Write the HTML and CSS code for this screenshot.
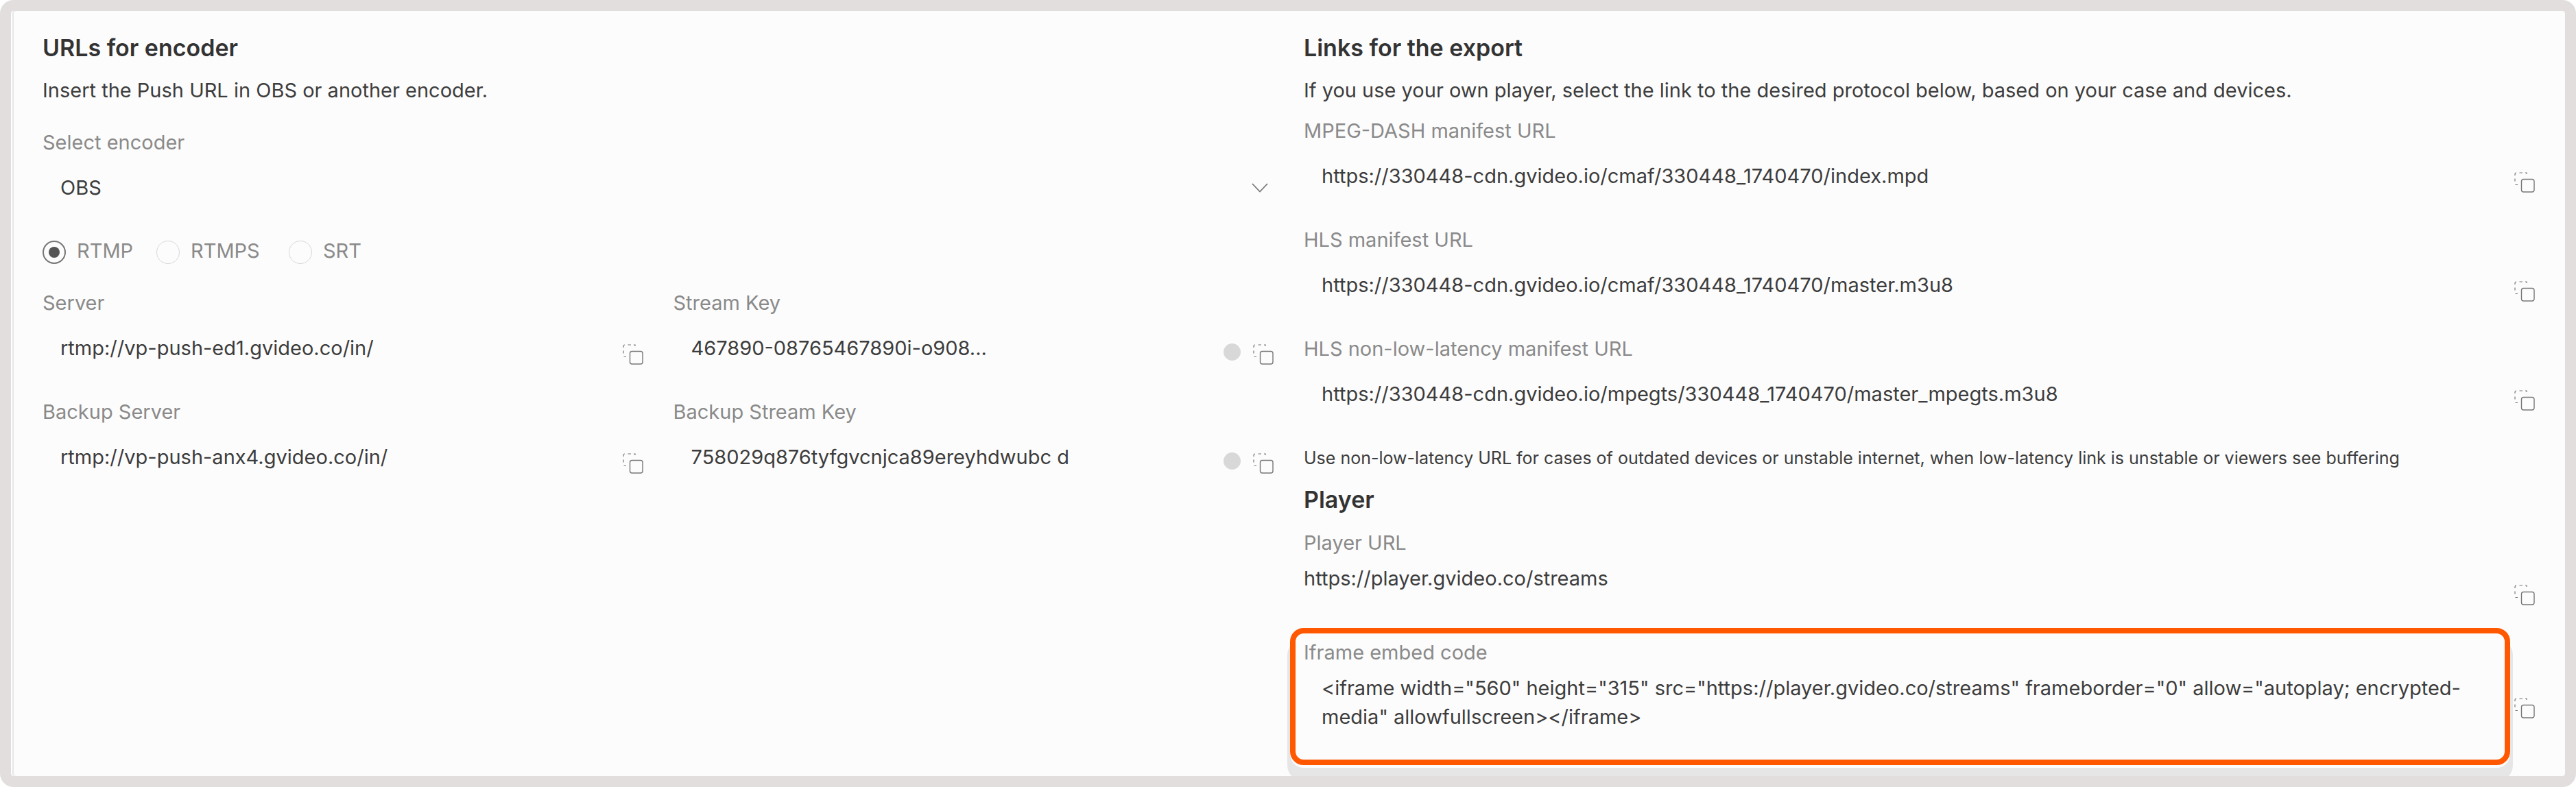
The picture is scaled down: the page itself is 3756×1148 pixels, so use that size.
FILE: index.html
```html
<!DOCTYPE html>
<html lang="en">
<head>
<meta charset="utf-8">
<title>Stream settings</title>
<link rel="stylesheet" href="styles.css">
</head>
<body>
<svg class="sprite" aria-hidden="true">
  <symbol id="copy" viewBox="0 0 30 30">
    <path d="M1 5V3.500Q1 1.200 3 1M7.500 1h4.500M16 1h2v2M1 9.500v4M1.500 18.500H5" fill="none" stroke="#777" stroke-width="1.200"/>
    <rect x="10.500" y="10.500" width="18.500" height="18.500" rx="3" fill="none" stroke="#777" stroke-width="1.400"/>
  </symbol>
</svg>
<main class="panel">
  <section class="encoder">
    <h2 class="title">URLs for encoder</h2>
    <p class="lead">Insert the Push URL in OBS or another encoder.</p>
    <div class="field">
      <label class="label" for="encoder">Select encoder</label>
      <div class="control">
        <select class="value" id="encoder"><option>OBS</option></select>
        <svg class="chevron" viewBox="0 0 24 14" aria-hidden="true"><path d="M1 1l11 11.500L23 1" fill="none" stroke="#777" stroke-width="1.800"/></svg>
      </div>
    </div>
    <div class="protocols" role="radiogroup" aria-label="Protocol">
      <label class="protocol"><input class="radio" type="radio" name="protocol" checked>RTMP</label>
      <label class="protocol"><input class="radio" type="radio" name="protocol">RTMPS</label>
      <label class="protocol"><input class="radio" type="radio" name="protocol">SRT</label>
    </div>
    <div class="keys">
      <div class="field">
        <label class="label" for="server">Server</label>
        <div class="control">
          <input class="value" id="server" type="text" readonly value="rtmp://vp-push-ed1.gvideo.co/in/">
          <button class="copy" type="button" aria-label="Copy server"><svg class="icon"><use href="#copy"/></svg></button>
        </div>
      </div>
      <div class="field">
        <label class="label" for="key">Stream Key</label>
        <div class="control">
          <input class="value" id="key" type="text" readonly value="467890-08765467890i-o908...">
          <button class="reveal" type="button" aria-label="Show stream key"></button>
          <button class="copy" type="button" aria-label="Copy stream key"><svg class="icon"><use href="#copy"/></svg></button>
        </div>
      </div>
      <div class="field">
        <label class="label" for="backup-server">Backup Server</label>
        <div class="control">
          <input class="value" id="backup-server" type="text" readonly value="rtmp://vp-push-anx4.gvideo.co/in/">
          <button class="copy" type="button" aria-label="Copy backup server"><svg class="icon"><use href="#copy"/></svg></button>
        </div>
      </div>
      <div class="field">
        <label class="label" for="backup-key">Backup Stream Key</label>
        <div class="control">
          <input class="value" id="backup-key" type="text" readonly value="758029q876tyfgvcnjca89ereyhdwubc d">
          <button class="reveal" type="button" aria-label="Show backup stream key"></button>
          <button class="copy" type="button" aria-label="Copy backup stream key"><svg class="icon"><use href="#copy"/></svg></button>
        </div>
      </div>
    </div>
  </section>

  <section class="export">
    <h2 class="title">Links for the export</h2>
    <p class="lead">If you use your own player, select the link to the desired protocol below, based on your case and devices.</p>
    <div class="links">
      <div class="field">
        <label class="label" for="dash">MPEG-DASH manifest URL</label>
        <div class="control">
          <input class="value" id="dash" type="text" readonly value="https://330448-cdn.gvideo.io/cmaf/330448_1740470/index.mpd">
          <button class="copy" type="button" aria-label="Copy MPEG-DASH URL"><svg class="icon"><use href="#copy"/></svg></button>
        </div>
      </div>
      <div class="field">
        <label class="label" for="hls">HLS manifest URL</label>
        <div class="control">
          <input class="value" id="hls" type="text" readonly value="https://330448-cdn.gvideo.io/cmaf/330448_1740470/master.m3u8">
          <button class="copy" type="button" aria-label="Copy HLS URL"><svg class="icon"><use href="#copy"/></svg></button>
        </div>
      </div>
      <div class="field">
        <label class="label" for="hls-mpegts">HLS non-low-latency manifest URL</label>
        <div class="control">
          <input class="value" id="hls-mpegts" type="text" readonly value="https://330448-cdn.gvideo.io/mpegts/330448_1740470/master_mpegts.m3u8">
          <button class="copy" type="button" aria-label="Copy HLS non-low-latency URL"><svg class="icon"><use href="#copy"/></svg></button>
        </div>
      </div>
    </div>
    <p class="note">Use non-low-latency URL for cases of outdated devices or unstable internet, when low-latency link is unstable or viewers see buffering</p>
    <h2 class="title">Player</h2>
    <div class="field player">
      <label class="label" for="player">Player URL</label>
      <div class="control compact">
        <input class="value flush" id="player" type="text" readonly value="https://player.gvideo.co/streams">
        <button class="copy" type="button" aria-label="Copy player URL"><svg class="icon"><use href="#copy"/></svg></button>
      </div>
    </div>
    <div class="embed">
      <div class="highlight">
        <label class="label" for="iframe">Iframe embed code</label>
        <textarea class="value code" id="iframe" rows="2" readonly>&lt;iframe width="560" height="315" src="https://player.gvideo.co/streams" frameborder="0" allow="autoplay; encrypted-media" allowfullscreen&gt;&lt;/iframe&gt;</textarea>
      </div>
      <button class="copy" type="button" aria-label="Copy embed code"><svg class="icon"><use href="#copy"/></svg></button>
    </div>
  </section>
</main>
</body>
</html>
```
FILE: styles.css
```css
* { box-sizing: border-box; }

body {
  margin: 0;
  background: #fff;
  color: #3d3d3d;
  font: 400 29px/42px Inter, sans-serif;
  font-optical-sizing: none;
}

.sprite { position: absolute; width: 0; height: 0; }

.panel {
  display: grid;
  grid-template-columns: 1fr 1fr;
  padding: 33px 0 16px 46px;
  border: 16px solid #e2dedd;
  border-radius: 20px;
  background: #fcfcfc;
  overflow: hidden;
  box-shadow: inset 2px 0 #fff, inset 4px 0 #e8e6e6;
}

.title { margin: 0; font-size: 34px; line-height: 42px; font-weight: 600; color: #333; }
.lead { margin: 20px 0 0; }

.field { padding-right: 44px; }
.label { display: block; color: #8a8a8a; }

.control { display: flex; align-items: flex-start; padding: 24px 0 21px; }
.compact { padding: 10px 0 0; }

.value {
  flex: 1;
  min-width: 0;
  height: 42px;
  margin: 0;
  padding: 0 0 0 26px;
  border: 0;
  outline: 0;
  background: none;
  color: inherit;
  font: inherit;
  appearance: none;
}
.flush { padding-left: 0; }

.copy, .reveal { flex: none; padding: 0; border: 0; background: none; cursor: pointer; }
.copy { width: 30px; height: 30px; margin-top: 15px; }
.compact .copy { margin-top: 30px; }
.icon { display: block; width: 30px; height: 30px; }
.reveal { width: 25px; height: 25px; margin: 14px 18px 0 0; border-radius: 50%; background: #d8d8d8; }

.encoder > .field { margin-top: 34px; }
.chevron { width: 24px; height: 14px; margin: 14px 8px 0 0; }

.protocols { display: grid; grid-template-columns: 166px 193px auto; margin-top: 29px; color: #8a8a8a; }
.protocol { display: flex; align-items: center; gap: 16px; }
.radio {
  display: grid;
  place-items: center;
  width: 34px;
  height: 34px;
  margin: 3px 0 0;
  border: 1px solid #d8d8d8;
  border-radius: 50%;
  appearance: none;
}
.radio:checked { border: 2px solid #777; }
.radio:checked::before { content: ""; width: 16px; height: 16px; border-radius: 50%; background: #555; }

.keys { display: grid; grid-template-columns: 1fr 1fr; row-gap: 27px; margin-top: 34px; }
.links { display: grid; row-gap: 27px; margin-top: 17px; }

.note { margin: 30px 0 22px; font-size: 25px; line-height: 36px; }
.player { margin-top: 21px; }

.embed { display: flex; align-items: flex-start; margin: 33px 44px 0 -20px; }
.highlight {
  flex: 1;
  padding: 7px 12px 41px;
  border: 8px solid #ff5800;
  border-radius: 20px;
  background: #fcfcfc;
  box-shadow: 0 4px 0 #fcfcfc, 0 20px 0 4px #e6e6e6;
}
.code { display: block; width: 100%; height: 84px; margin-top: 10px; resize: none; overflow: hidden; }
.embed .copy { margin: 102px 0 0 6px; }
```
